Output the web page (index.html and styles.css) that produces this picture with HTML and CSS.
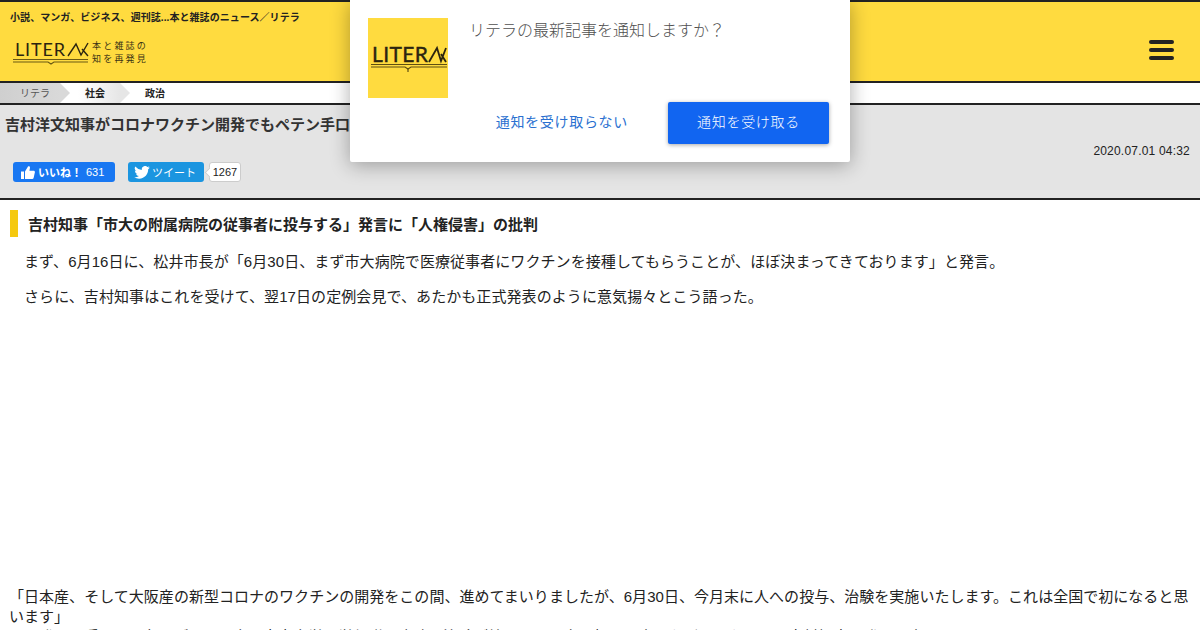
FILE: index.html
```html
<!DOCTYPE html>
<html lang="ja">
<head>
<meta charset="utf-8">
<title>リテラ</title>
<link rel="stylesheet" href="styles.css">
</head>
<body>
<header class="site-header">
  <div class="header-left">
    <p class="tagline">小説、マンガ、ビジネス、週刊誌...本と雑誌のニュース／リテラ</p>
    <a class="logo">
      <svg class="logo-art" width="79" height="28" viewBox="0 0 79 28">
        <text class="logo-word" x="2" y="19" textLength="50" lengthAdjust="spacing">LITER</text>
        <path d="M55 19 L63 7 L68 18 L75 6 M69 12 L75 19" fill="none" stroke="#2b2410" stroke-width="1.4"/>
        <path d="M0 22.500 H75 M0 25 H35 L38 27 L41 25 H75" fill="none" stroke="#6b5a14" stroke-width="1.200"/>
      </svg>
      <span class="logo-copy"><span>本と雑誌の</span><span>知を再発見</span></span>
    </a>
  </div>
  <div class="burger"><i></i><i></i><i></i></div>
</header>
<nav class="crumbs">
  <span class="crumb crumb-root">リテラ</span>
  <span class="crumb crumb-mid">社会</span>
  <span class="crumb crumb-last">政治</span>
</nav>
<section class="article-head">
  <h1 class="article-title">吉村洋文知事がコロナワクチン開発でもペテン手口</h1>
  <div class="date">2020.07.01 04:32</div>
  <div class="social">
    <span class="btn-fb">
      <svg width="14" height="13" viewBox="0 0 14 13"><path fill="#fff" d="M0 5.500h3V13H0zM4 5.500 7 .6c.9-.6 2 0 2 1.100L8.400 4.700h4.200c.9 0 1.500.8 1.300 1.600l-1.300 5.600c-.2.700-.7 1.100-1.400 1.100H4z"/></svg>
      <span>いいね！</span><span class="fb-count">631</span>
    </span>
    <span class="btn-tw">
      <svg width="16" height="13" viewBox="0 0 24 20"><path fill="#fff" d="M24 2.400a9.800 9.800 0 0 1-2.800.8A4.900 4.900 0 0 0 23.300.5a9.800 9.800 0 0 1-3.100 1.200 4.900 4.900 0 0 0-8.400 4.500A14 14 0 0 1 1.700.9a4.900 4.900 0 0 0 1.500 6.600 4.900 4.900 0 0 1-2.200-.6v.1a4.900 4.900 0 0 0 3.900 4.800 4.900 4.900 0 0 1-2.200.1 4.900 4.900 0 0 0 4.600 3.400A9.900 9.900 0 0 1 0 17.300 14 14 0 0 0 7.500 19.500c9.100 0 14-7.500 14-14v-.6A10 10 0 0 0 24 2.400z"/></svg>
      <span>ツイート</span>
    </span>
    <span class="tw-count">1267</span>
  </div>
</section>
<main class="article-body">
  <h2 class="section-title">吉村知事「市大の附属病院の従事者に投与する」発言に「人権侵害」の批判</h2>
  <p class="para">まず、6月16日に、松井市長が「6月30日、まず市大病院で医療従事者にワクチンを接種してもらうことが、ほぼ決まってきております」と発言。</p>
  <p class="para">さらに、吉村知事はこれを受けて、翌17日の定例会見で、あたかも正式発表のように意気揚々とこう語った。</p>
  <div class="ad-space"></div>
  <p class="quote">「日本産、そして大阪産の新型コロナのワクチンの開発をこの間、進めてまいりましたが、6月30日、今月末に人への投与、治験を実施いたします。これは全国で初になると思います」</p>
  <p class="quote">この発言を受けて、各メディアは大阪市立大学医学部附属病院で治験が始まると一斉に報じ、大きな話題となった。吉村知事の発言は大きく</p>
</main>
<div class="dialog">
  <div class="dialog-main">
    <svg class="dialog-logo" width="80" height="80" viewBox="0 0 80 80">
      <rect width="80" height="80" fill="#ffdb3f"/>
      <text class="dialog-word" x="4" y="44" textLength="56" lengthAdjust="spacing">LITER</text>
      <path d="M61 44 L69 30 L73 43 L78 30 M73 36 L78 44" fill="none" stroke="#2b2410" stroke-width="1.800"/>
      <path d="M3 46.500 H79 M3 49 H37 L40 51 L43 49 H79" fill="none" stroke="#5f4f12" stroke-width="1.200"/>
      <path d="M40 51 V54" stroke="#5f4f12" stroke-width="1.200"/>
    </svg>
    <p class="dialog-text">リテラの最新記事を通知しますか？</p>
  </div>
  <div class="dialog-actions">
    <span class="dialog-cancel">通知を受け取らない</span>
    <span class="dialog-ok">通知を受け取る</span>
  </div>
</div>
</body>
</html>
```
FILE: styles.css
```css
* { box-sizing: border-box; }
html, body { margin: 0; height: 630px; overflow: hidden; }
body {
  font-family: "Liberation Sans", "Noto Sans CJK JP", sans-serif;
  color: #222;
  background: #fff;
  text-spacing-trim: space-all;
}
p, h1, h2 { margin: 0; }

.site-header {
  height: 83px;
  background: #ffdb3f;
  border-top: 2px solid #222;
  border-bottom: 2px solid #222;
  padding: 0 20px 0 10px;
  display: flex;
  justify-content: space-between;
  align-items: center;
}
.header-left { display: flex; flex-direction: column; align-self: flex-start; }
.tagline { font-size: 10px; font-weight: bold; line-height: 14px; margin-top: 9px; color: #222; letter-spacing: .07px; }
.logo { display: flex; align-items: flex-start; margin: 12px 0 0 3px; }
.logo-art { display: block; }
.logo-word { font: 18px Lato, sans-serif; fill: #2b2410; }
.logo-copy {
  display: flex; flex-direction: column;
  font-size: 9px; line-height: 13px; letter-spacing: 2.2px;
  color: #3a3214; margin: 3px 0 0 0;
}
.burger { width: 25px; display: flex; flex-direction: column; gap: 3.5px; margin: 17px 6px 0 0; }
.burger i { display: block; height: 4.500px; border-radius: 2.250px; background: #222; }

.crumbs {
  height: 22px;
  display: flex;
  border-bottom: 2px solid #222;
  font-size: 10px;
  line-height: 22px;
}
.crumb { position: relative; display: block; text-align: center; }
.crumb-root {
  width: 60px; padding-left: 10px; color: #555;
  background: linear-gradient(90deg, #cfcfcf, #d9d9d9);
}
.crumb-mid {
  width: 60px; padding-left: 10px; font-weight: bold;
  background: linear-gradient(90deg, #fff 30%, #e6e6e6);
}
.crumb-last { width: 60px; padding-left: 10px; font-weight: bold; }
.crumb-root::after, .crumb-mid::after {
  content: "";
  position: absolute;
  top: 0;
  left: 100%;
  z-index: 1;
  border-style: solid;
  border-width: 10px 0 10px 10px;
  border-color: transparent transparent transparent #d9d9d9;
}
.crumb-mid::after { border-left-color: #e6e6e6; }

.article-head {
  height: 95px;
  background: #e4e4e4;
  border-bottom: 2px solid #222;
}
.article-title {
  font-size: 15px;
  font-weight: bold;
  line-height: 20px;
  padding: 10px 0 0 5px;
  color: #333;
}
.date { font-size: 12px; letter-spacing: .2px; line-height: 14px; text-align: right; padding: 9px 10px 0 0; color: #222; }
.social { display: flex; align-items: center; margin: 4px 0 0 13px; }
.btn-fb, .btn-tw {
  height: 20px; display: flex; align-items: center; color: #fff;
  border-radius: 3px; font-size: 11px;
}
.btn-fb { width: 102px; background: #1877f2; padding-left: 8px; gap: 3px; font-weight: bold; }
.fb-count { font-weight: normal; margin-left: 1px; }
.btn-tw { width: 76px; background: #1b95e0; margin-left: 13px; padding-left: 6px; gap: 2px; }
.tw-count {
  position: relative;
  margin-left: 5px;
  height: 20px; width: 32px;
  background: #fff; border: 1px solid #ccc; border-radius: 3px;
  font-size: 11px; line-height: 18px; text-align: center; color: #222;
}
.tw-count::before {
  content: "";
  position: absolute;
  left: -4px; top: 6px;
  width: 6px; height: 6px;
  background: #fff;
  border-left: 1px solid #ccc;
  border-bottom: 1px solid #ccc;
  transform: rotate(45deg);
}

.article-body { padding: 10px 10px 0; font-size: 15px; }
.section-title {
  font-size: 15px; font-weight: bold; height: 27px; line-height: 30px;
  border-left: 8px solid #f5c90f; padding-left: 10px; color: #222;
}
.para { line-height: 20px; text-indent: 14px; margin-top: 15px; letter-spacing: .08px; }
.ad-space { height: 280px; }
.quote { line-height: 20px; margin-left: -1px; letter-spacing: .03px; }

.dialog {
  position: absolute;
  left: 350px; top: 0;
  width: 500px; height: 162px;
  background: #fff;
  border-radius: 0 0 2px 2px;
  box-shadow: 0 3px 20px rgba(0, 0, 0, .32);
  padding: 18px 21px 18px 18px;
  font-family: "Noto Sans CJK JP", sans-serif;
  font-weight: 300;
}
.dialog-main { display: flex; height: 84px; }
.dialog-logo { display: block; flex: none; }
.dialog-word { font: 21px Lato, sans-serif; fill: #2b2410; stroke: #2b2410; stroke-width: .4px; }
.dialog-text { font-size: 16px; line-height: 24px; color: #4f4f4f; margin: -1px 0 0 21px; }
.dialog-actions { display: flex; justify-content: flex-end; align-items: center; }
.dialog-cancel { font-size: 14px; letter-spacing: .7px; color: #2a70d0; margin: -4px 40px 0 0; font-weight: 400; }
.dialog-ok {
  width: 161px; height: 42px;
  background: #1165f1; color: #fff;
  border-radius: 2px;
  font-size: 14px; letter-spacing: .7px; font-weight: 300;
  line-height: 39px; text-align: center;
  box-shadow: 0 1px 4px rgba(0, 0, 0, .35);
}
```
